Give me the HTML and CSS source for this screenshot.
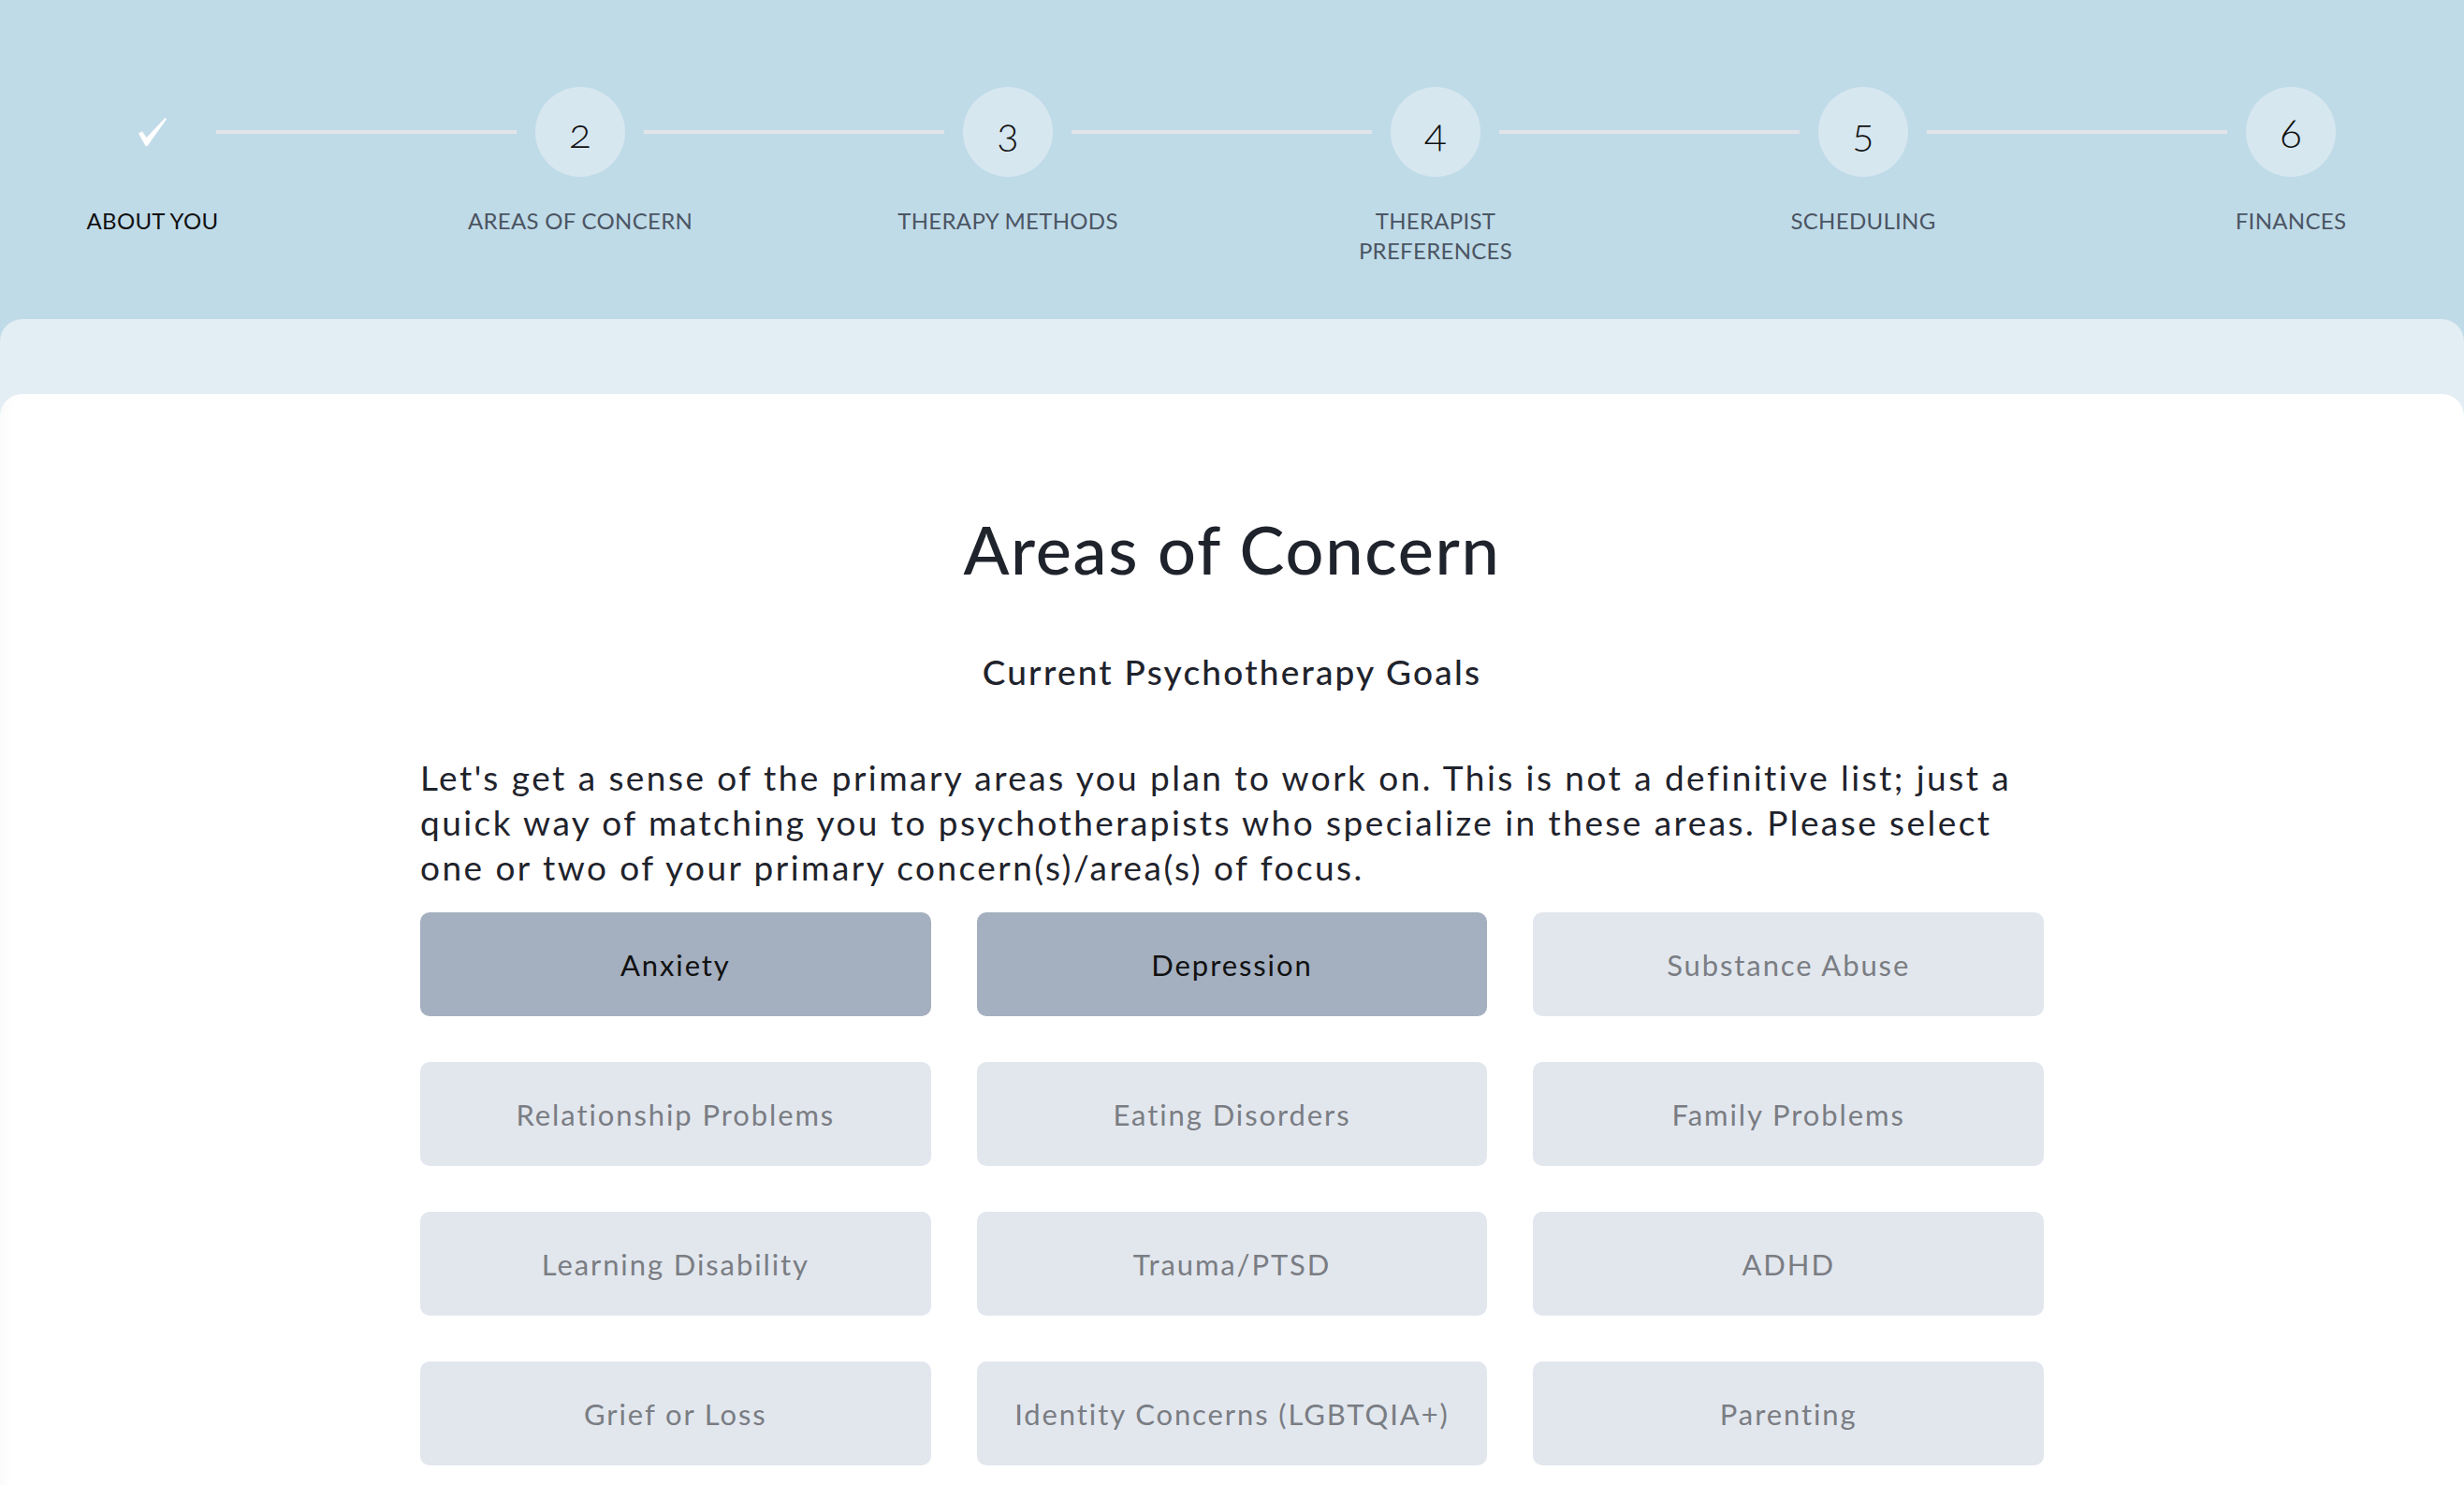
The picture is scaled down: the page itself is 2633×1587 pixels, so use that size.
FILE: index.html
```html
<!DOCTYPE html>
<html lang="en">
<head>
  <meta charset="UTF-8" />
  <meta name="viewport" content="width=device-width, initial-scale=1.0"/>
  <title>Areas of Concern</title>
  <link rel="stylesheet" href="styles.css">
</head>
<body>
  <header class="progress">
    <ol class="stepper">
      <li class="step done">
        <span class="dot">
          <svg width="32" height="32" viewBox="0 0 32 32"><path d="M1 17.5 L5 15.5 L9.5 22 L29.5 1 L31 2.2 L10.5 31 L8.6 31 Z" fill="#fff"/></svg>
        </span>
        <span class="step-label">About You</span>
      </li>
      <li class="line"></li>
      <li class="step">
        <span class="dot">2</span>
        <span class="step-label">Areas of Concern</span>
      </li>
      <li class="line"></li>
      <li class="step">
        <span class="dot">3</span>
        <span class="step-label">Therapy Methods</span>
      </li>
      <li class="line"></li>
      <li class="step">
        <span class="dot">4</span>
        <span class="step-label">Therapist Preferences</span>
      </li>
      <li class="line"></li>
      <li class="step">
        <span class="dot">5</span>
        <span class="step-label">Scheduling</span>
      </li>
      <li class="line"></li>
      <li class="step">
        <span class="dot">6</span>
        <span class="step-label">Finances</span>
      </li>
    </ol>
  </header>

  <main class="band">
    <section class="card">
      <h1>Areas of Concern</h1>
      <h2>Current Psychotherapy Goals</h2>
      <p class="intro">Let's get a sense of the primary areas you plan to work on. This is not a definitive list; just a quick way of matching you to psychotherapists who specialize in these areas. Please select one or two of your primary concern(s)/area(s) of focus.</p>

      <div class="choices">
        <button class="choice picked" type="button">Anxiety</button>
        <button class="choice picked" type="button">Depression</button>
        <button class="choice" type="button">Substance Abuse</button>
        <button class="choice" type="button">Relationship Problems</button>
        <button class="choice" type="button">Eating Disorders</button>
        <button class="choice" type="button">Family Problems</button>
        <button class="choice" type="button">Learning Disability</button>
        <button class="choice" type="button">Trauma/PTSD</button>
        <button class="choice" type="button">ADHD</button>
        <button class="choice" type="button">Grief or Loss</button>
        <button class="choice" type="button">Identity Concerns (LGBTQIA+)</button>
        <button class="choice" type="button">Parenting</button>
      </div>
    </section>
  </main>
</body>
</html>
```

FILE: styles.css
```css
body {
  margin: 0;
  font-family: Lato, "Open Sans", sans-serif;
  color: #1f232c;
  background: #c0dbe8;
}

/* progress header */
.progress {
  height: 341px;
  box-sizing: border-box;
  padding: 93px 137px 0 115px;
}
.stepper {
  display: flex;
  margin: 0;
  padding: 0;
  list-style: none;
}
.step {
  width: 96px;
  display: flex;
  flex-direction: column;
  align-items: center;
  flex-shrink: 0;
}
.dot {
  width: 96px;
  height: 96px;
  border-radius: 50%;
  background: #d7e7f0;
  display: flex;
  align-items: center;
  justify-content: center;
  font-size: 44px;
  font-weight: 300;
  font-variant-numeric: oldstyle-nums;
  color: #111;
}
.done .dot {
  background: transparent;
}
.step-label {
  width: 270px;
  margin-top: 31px;
  text-align: center;
  text-transform: uppercase;
  font-size: 24px;
  line-height: 32px;
  letter-spacing: 0.3px;
  color: #4b5563;
}
.done .step-label {
  color: #111;
}
.line {
  flex: 1;
  height: 4px;
  margin: 46px 20px 0;
  background: #e1e5ea;
}

/* form sheet */
.band {
  display: block;
  background: #e3eef4;
  border-radius: 24px 24px 0 0;
  padding-top: 80px;
}
.card {
  background: #fff;
  border-radius: 24px 24px 0 0;
  padding: 122px 0 60px;
  box-shadow: inset 18px 0 16px -16px rgba(0, 0, 0, 0.03);
}
.card h1 {
  margin: 0;
  text-align: center;
  font-size: 72px;
  line-height: 1.2;
  font-weight: 500;
  letter-spacing: 1.7px;
}
.card h2 {
  margin: 71px 0 0;
  text-align: center;
  font-size: 37px;
  line-height: 36px;
  font-weight: 500;
  letter-spacing: 2.2px;
}
.intro,
.choices {
  max-width: 1735px;
  margin-left: auto;
  margin-right: auto;
}
.intro {
  margin-top: 71px;
  margin-bottom: 24px;
  font-size: 37px;
  line-height: 48px;
  font-weight: 400;
  letter-spacing: 2.45px;
}
.choices {
  display: grid;
  grid-template-columns: repeat(3, 1fr);
  gap: 49px;
}
.choice {
  height: 111px;
  border: 0;
  border-radius: 10px;
  background: #e2e7ee;
  color: #7a7d83;
  font-family: inherit;
  font-size: 31px;
  letter-spacing: 1.9px;
  cursor: pointer;
}
.choice.picked {
  background: #a4afbf;
  color: #111;
}
```
